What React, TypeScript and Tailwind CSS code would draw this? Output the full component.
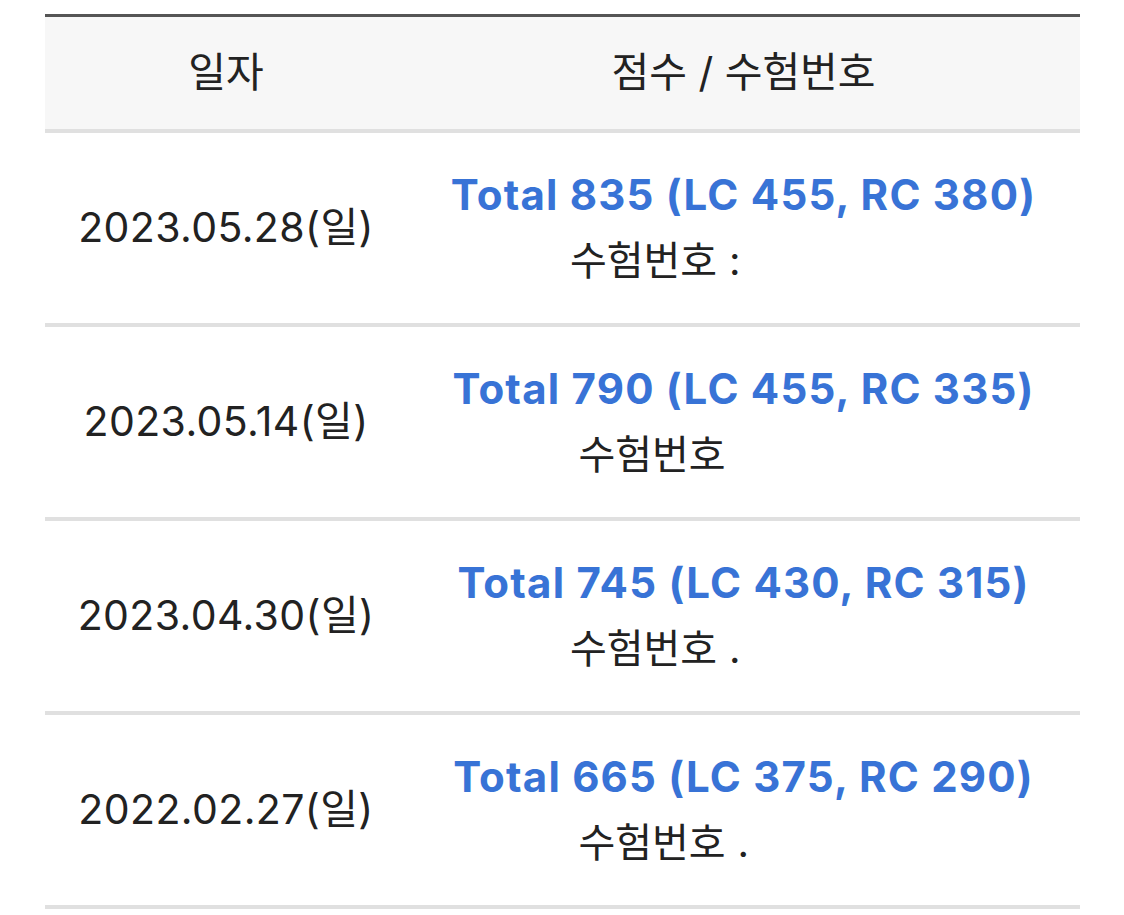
import React from "react";

type Row = {
  date: string;
  total: number;
  lc: number;
  rc: number;
  sep: string;
  hidden: number;
};

const rows: Row[] = [
  { date: "2023.05.28(일)", total: 835, lc: 455, rc: 380, sep: ":", hidden: 176 },
  { date: "2023.05.14(일)", total: 790, lc: 455, rc: 335, sep: "", hidden: 159 },
  { date: "2023.04.30(일)", total: 745, lc: 430, rc: 315, sep: ".", hidden: 176 },
  { date: "2022.02.27(일)", total: 665, lc: 375, rc: 290, sep: ".", hidden: 159 },
];

const font = { fontFamily: '"Inter", "Noto Sans CJK KR", sans-serif' };

export default function App() {
  return (
    <div className="min-h-screen bg-white pt-[14px] pl-[45px]">
      <div className="w-[1035px] border-t-[3px] border-[#555555]" style={font}>
        <div className="flex h-[116px] bg-[#f7f7f7] border-b-4 border-[#e0e0e0] text-[41px] text-[#222222]">
          <div className="w-[362px] flex items-center justify-center">일자</div>
          <div className="flex-1 flex items-center justify-center">점수 / 수험번호</div>
        </div>

        {rows.map((r) => (
          <div key={r.date} className="flex h-[194px] border-b-4 border-[#e0e0e0] text-[#222222]">
            <div className="w-[362px] flex items-center justify-center text-[41px] tracking-[0.4px]">
              {r.date}
            </div>
            <div className="flex-1 flex flex-col items-center justify-center">
              <div className="text-[42px] leading-[66px] font-bold tracking-[1.2px] text-[#3873d6]">
                Total {r.total} (LC {r.lc}, RC {r.rc})
              </div>
              <div className="text-[40px] leading-[66px] flex items-center">
                <span>수험번호</span>
                <span className="ml-[12px] inline-block w-[12px]">{r.sep}</span>
                {/* exam number is blanked out in the original */}
                <span className="inline-block" style={{ width: r.hidden }} />
              </div>
            </div>
          </div>
        ))}
      </div>
    </div>
  );
}
